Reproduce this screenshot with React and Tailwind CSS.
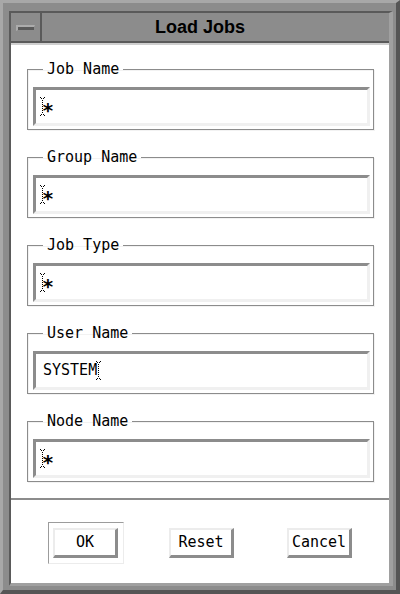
import React from 'react';

const mono = { fontFamily: '"DejaVu Sans Mono", "Liberation Mono", monospace' };

const Caret = ({ className = '' }) => (
  <svg width="5" height="19" viewBox="0 0 5 19" shapeRendering="crispEdges" className={className}>
    <g fill="#000">
      <rect x="0" y="0" width="1" height="1" />
      <rect x="4" y="0" width="1" height="1" />
      <rect x="1" y="1" width="1" height="1" />
      <rect x="3" y="1" width="1" height="1" />
      {[3, 5, 7, 9, 11, 13, 15].map((y) => (
        <rect key={y} x="2" y={y} width="1" height="1" />
      ))}
      <rect x="1" y="17" width="1" height="1" />
      <rect x="3" y="17" width="1" height="1" />
      <rect x="0" y="18" width="1" height="1" />
      <rect x="4" y="18" width="1" height="1" />
    </g>
  </svg>
);

const Field = ({ label, value }) => (
  <fieldset className="h-[69px] border border-[#8c8c8c] pl-[5px] pr-[3px] pt-[9px] pb-[3px] shadow-[inset_1px_1px_0_#f2f2f2,1px_1px_0_#f2f2f2]">
    <legend className="ml-[10px] px-[4px] text-[15px] leading-[17px] text-black" style={mono}>
      {label}
    </legend>
    <div
      className="flex h-[39px] items-center border-t-[3px] border-l-[3px] border-b-[3px] border-r-[3px] border-t-[#8c8c8c] border-l-[#8c8c8c] border-b-[#f0f0f0] border-r-[#f0f0f0] bg-white text-[15px] text-black"
      style={mono}
    >
      {value ? (
        <>
          <span className="pl-[7px]">{value}</span>
          <Caret className="-ml-[1px]" />
        </>
      ) : (
        <>
          <Caret className="ml-[4px]" />
          <span className="-ml-[3px] text-[20px] font-bold leading-none">∗</span>
        </>
      )}
    </div>
  </fieldset>
);

const Btn = ({ children }) => (
  <button
    className="flex h-[30px] w-[65px] items-center justify-center border-t-2 border-l-2 border-b-[3px] border-r-[3px] border-t-[#ececec] border-l-[#ececec] border-b-[#8c8c8c] border-r-[#8c8c8c] bg-white text-[15px] text-black"
    style={mono}
  >
    {children}
  </button>
);

export default function App() {
  const fields = [
    { label: 'Job Name' },
    { label: 'Group Name' },
    { label: 'Job Type' },
    { label: 'User Name', value: 'SYSTEM' },
    { label: 'Node Name' },
  ];

  return (
    <div className="flex h-[594px] w-[400px] flex-col border-t-[3px] border-l-[3px] border-r-[4px] border-b-[4px] border-t-[#a8a8a8] border-l-[#a8a8a8] border-r-[#555] border-b-[#555] bg-[#8c8c8c] pl-[6px] pt-[8px] pr-[3px] pb-[4px]">
      <div className="flex flex-1 flex-col border-t-2 border-l-2 border-r-[4px] border-b-[3px] border-t-[#5a5a5a] border-l-[#5a5a5a] border-r-[#a0a0a0] border-b-[#a0a0a0]">
        {/* title bar */}
        <div className="border-b-2 border-[#cfcfcf]">
          <div className="grid h-[30px] grid-cols-[31px_1fr_31px] border-b-2 border-[#5a5a5a] bg-[#8c8c8c]">
            <div className="flex items-center justify-center border-r-2 border-[#5a5a5a]">
              <div className="mt-[2px] h-[6px] w-[19px] border-t-2 border-l-2 border-b border-r border-t-[#acacac] border-l-[#acacac] border-b-[#8c8c8c] border-r-[#8c8c8c] bg-[#5a5a5a]" />
            </div>
            <div
              className="flex items-center justify-center text-[18px] font-bold text-black"
              style={{ fontFamily: '"Liberation Sans", Arial, sans-serif' }}
            >
              Load Jobs
            </div>
            <div />
          </div>
        </div>

        {/* body */}
        <div className="flex flex-1 flex-col bg-white">
          <div className="flex flex-col gap-[19px] pl-[16px] pr-[15px] pt-[16px]">
            {fields.map((f) => (
              <Field key={f.label} label={f.label} value={f.value} />
            ))}
          </div>

          <div className="mt-[16px] h-[2px] bg-[#8c8c8c]" />

          <div className="flex items-center pl-[37px] pt-[22px]">
            <div className="border border-t-[#9c9c9c] border-l-[#9c9c9c] border-b-[#ececec] border-r-[#ececec] pl-[4px] pt-[5px] pr-[5px] pb-[5px]">
              <Btn>OK</Btn>
            </div>
            <div className="ml-[45px]">
              <Btn>Reset</Btn>
            </div>
            <div className="ml-[53px]">
              <Btn>Cancel</Btn>
            </div>
          </div>
        </div>
      </div>
    </div>
  );
}
